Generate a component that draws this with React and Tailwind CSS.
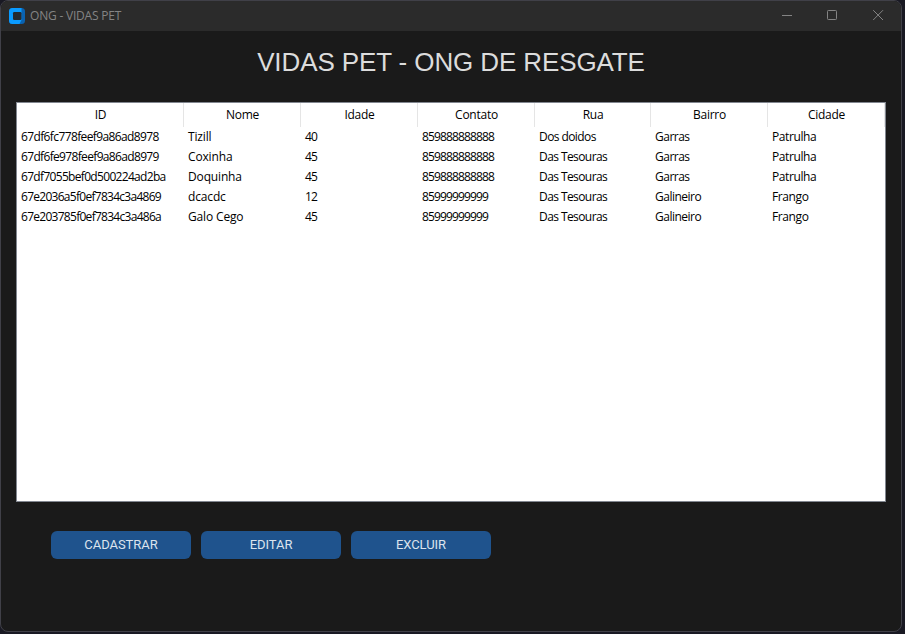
const columns = [
  { label: "ID", width: "w-[167px]" },
  { label: "Nome", width: "w-[117px]" },
  { label: "Idade", width: "w-[117px]" },
  { label: "Contato", width: "w-[117px]" },
  { label: "Rua", width: "w-[116px]" },
  { label: "Bairro", width: "w-[117px]" },
  { label: "Cidade", width: "w-[117px]" },
];

const rows = [
  ["67df6fc778feef9a86ad8978", "Tizill", "40", "859888888888", "Dos doidos", "Garras", "Patrulha"],
  ["67df6fe978feef9a86ad8979", "Coxinha", "45", "859888888888", "Das Tesouras", "Garras", "Patrulha"],
  ["67df7055bef0d500224ad2ba", "Doquinha", "45", "859888888888", "Das Tesouras", "Garras", "Patrulha"],
  ["67e2036a5f0ef7834c3a4869", "dcacdc", "12", "85999999999", "Das Tesouras", "Galineiro", "Frango"],
  ["67e203785f0ef7834c3a486a", "Galo Cego", "45", "85999999999", "Das Tesouras", "Galineiro", "Frango"],
];

const idTracking = [
  "tracking-[-0.62px]",
  "tracking-[-0.66px]",
  "tracking-[-0.68px]",
  "tracking-[-0.72px]",
  "tracking-[-0.72px]",
];

const tracking = [
  "",
  "tracking-[-0.15px]",
  "tracking-[-0.85px]",
  "tracking-[-0.86px]",
  "tracking-[-0.58px]",
  "tracking-[-0.5px]",
  "tracking-[-0.4px]",
];

function TitleBar() {
  return (
    <header className="flex h-[30px] shrink-0 items-center bg-[#2b2b2b] pl-2 text-[#848484]">
      <svg width="16" height="16" viewBox="0 0 16 16" className="shrink-0">
        <rect width="16" height="16" rx="3.5" fill="#0a62b0" />
        <path d="M3.5 0H12.5V12L10.5 16H3.5A3.5 3.5 0 0 1 0 12.5V3.5A3.5 3.5 0 0 1 3.5 0Z" fill="#0a9bff" />
        <rect x="4" y="4" width="8.5" height="8" rx="1.2" fill="#242a30" />
      </svg>
      <span className="ml-[5px] text-[12px] leading-4 tracking-[-0.2px] whitespace-nowrap">ONG - VIDAS PET</span>
      <div className="ml-auto -mr-px flex h-full items-center">
        <svg width="46" height="30" viewBox="0 0 46 30" fill="none" stroke="currentColor">
          <path d="M18 14.5H28" />
        </svg>
        <svg width="46" height="30" viewBox="0 0 46 30" fill="none" stroke="currentColor">
          <rect x="17.5" y="9.5" width="9" height="9" rx="0.8" />
        </svg>
        <svg width="46" height="30" viewBox="0 0 46 30" fill="none" stroke="currentColor">
          <path d="M17.2 9.2L27 19M27 9.2L17.2 19" />
        </svg>
      </div>
    </header>
  );
}

function Table() {
  return (
    <div className="ml-[15px] h-[400px] w-[870px] shrink-0 border border-[#828790] bg-white text-[12px] text-black">
      <div className="flex h-6">
        {columns.map((c) => (
          <div key={c.label} className={`${c.width} shrink-0 border-r border-[#e5e5e5] pl-px text-center leading-6 tracking-[-0.25px]`}>
            {c.label}
          </div>
        ))}
      </div>
      {rows.map((row, r) => (
        <div key={row[0]} className="flex h-5">
          {row.map((cell, i) => (
            <div key={i} className={`${columns[i].width} ${i === 0 ? idTracking[r] : tracking[i]} shrink-0 pl-1 leading-5 whitespace-nowrap`}>
              {cell}
            </div>
          ))}
        </div>
      ))}
    </div>
  );
}

export default function App() {
  return (
    <div className="h-[634px] w-[905px] overflow-hidden bg-[#191923] font-['Open_Sans','Noto_Sans',sans-serif]">
      <main className="flex h-[632px] w-[902px] flex-col overflow-hidden rounded-lg border border-[#404048] bg-[#1a1a1a]">
        <TitleBar />
        <h1 className="mt-4 mb-[25px] h-[30px] text-center font-['Liberation_Sans',Arial,sans-serif] text-[26px] leading-[30px] tracking-[-0.11px] text-[#dcdcdc]">
          VIDAS PET - ONG DE RESGATE
        </h1>
        <Table />
        <div className="mt-[29px] ml-[50px] flex gap-[10px] font-[Roboto,sans-serif] text-[13px] tracking-[-0.05px] text-[#dce4ee]">
          {["CADASTRAR", "EDITAR", "EXCLUIR"].map((label) => (
            <button key={label} className="h-7 w-[140px] rounded-md bg-[#1f538d] leading-7">
              {label}
            </button>
          ))}
        </div>
      </main>
    </div>
  );
}
